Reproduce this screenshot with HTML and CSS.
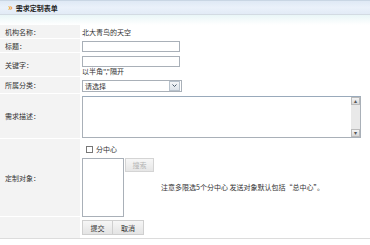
FILE: index.html
```html
<!DOCTYPE html>
<html>
<head>
<meta charset="utf-8">
<link rel="stylesheet" href="styles.css">
</head>
<body>
<div class="head">
  <span class="arrow">»</span><span class="title">需求定制表单</span>
</div>
<div class="head-fade"></div>
<div class="form">
  <div class="row r1"><div class="lab">机构名称：</div><div class="val">北大青鸟的天空</div></div>
  <div class="row r2"><div class="lab">标题：</div><div class="val"><div class="input"></div></div></div>
  <div class="row r3"><div class="lab">关键字：</div><div class="val col"><div class="input"></div><div class="hint">以半角","隔开</div></div></div>
  <div class="row r4"><div class="lab">所属分类：</div><div class="val"><div class="select"><span>请选择</span><span class="dd"><svg width="7" height="7" viewBox="0 0 7 7"><path d="M1.5 2.5 L3.5 4.5 L5.5 2.5" fill="none" stroke="#4a5a6a" stroke-width="1"/></svg></span></div></div></div>
  <div class="row r5"><div class="lab">需求描述：</div><div class="val"><div class="area"><div class="sb"><span class="sbtn">▴</span><span class="track"></span><span class="sbtn">▾</span></div></div></div></div>
  <div class="row r6"><div class="lab">定制对象：</div><div class="val col">
    <div class="chk"><span class="box"></span>分中心</div>
    <div class="pick"><div class="list"></div><div class="search">搜索</div><div class="note">注意多限选5个分中心 发送对象默认包括“总中心”。</div></div>
  </div></div>
  <div class="row r7"><div class="lab"></div><div class="val"><div class="btn">提交</div><div class="btn">取消</div></div></div>
</div>
</body>
</html>
```
FILE: styles.css
```css
html, body { margin: 0; padding: 0; background: #fff; }
body { font-family: "Noto Sans CJK SC", "Liberation Sans", sans-serif; font-size: 7px; color: #333; width: 370px; height: 245px; overflow: hidden; }
.head { height: 13px; border-top: 1px solid #c9d6e4; border-bottom: 1px solid #d3dbe3; background: linear-gradient(#dfe9f5, #eaf1fa 50%, #e2ebf6); display: flex; align-items: center; padding-left: 8px; }
.arrow { color: #f39a1e; font-weight: bold; font-size: 9px; margin-right: 3px; line-height: 1; }
.title { font-weight: bold; color: #222; font-size: 7px; }
.head-fade { height: 10px; background: linear-gradient(#e9f6f7, #fff); }
.form { border-bottom: 1px solid #dcdcdc; width: 370px; }
.row { display: flex; }
.lab { width: 80px; flex: none; background: #f3f3f3; border-bottom: 1px solid #fff; display: flex; align-items: center; padding-left: 5px; box-sizing: border-box; }
.val { flex: 1; padding-left: 2px; display: flex; align-items: center; }
.col { flex-direction: column; align-items: flex-start; justify-content: flex-start; }
.r1 { height: 14px; }
.r2 { height: 14px; }
.r3 { height: 24px; }
.r3 .val { padding-top: 3px; }
.r3 .hint { margin-top: 0px; line-height: 9px; }
.r4 { height: 17px; }
.r5 { height: 45px; }
.r6 { height: 78px; }
.r7 { height: 21px; }
.r7 .lab { border-bottom: none; }
.input { width: 96px; height: 9px; border: 1px solid #a9b0b8; background: #fff; }
.select { width: 96px; height: 10px; border: 1px solid #a9b0b8; display: flex; align-items: center; justify-content: space-between; padding-left: 2px; box-sizing: content-box; }
.select span:first-child { line-height: 10px; }
.dd { width: 9px; height: 8px; border: 1px solid #b8c2cc; background: linear-gradient(#f4f6f8, #dde3ea); margin-right: 1px; display: flex; align-items: center; justify-content: center; }
.area { width: 277px; height: 40px; border: 1px solid #a9b0b8; border-top-color: #9ab; display: flex; justify-content: flex-end; }
.sb { width: 9px; height: 40px; display: flex; flex-direction: column; background: #ececec; }
.sbtn { height: 8px; background: linear-gradient(#f4f4f4, #d8d8d8); border: 1px solid #bbb; box-sizing: border-box; font-size: 6px; line-height: 6px; text-align: center; color: #555; }
.track { flex: 1; background: #e9e9e9; }
.chk { display: flex; align-items: center; height: 10px; margin-top: 5px; padding-left: 4px; }
.box { width: 5px; height: 5px; border: 1px solid #777; margin-right: 3px; background: #fff; }
.pick { display: flex; align-items: flex-start; margin-top: 4px; }
.list { width: 40px; height: 57px; border: 1px solid #a9b0b8; background: #fff; }
.search { width: 29px; height: 14px; margin-left: 1px; border: 1px solid #d4d4d4; background: linear-gradient(#f7f7f7, #e6e6e6); color: #b5b5b5; display: flex; align-items: center; justify-content: center; box-sizing: border-box; }
.note { margin-left: 7px; margin-top: 24px; }
.r7 .val { align-items: flex-start; padding-top: 3px; }
.btn { width: 31px; height: 15px; border: 1px solid #cfcfcf; background: linear-gradient(#f6f6f6, #e4e4e4); display: flex; align-items: center; justify-content: center; box-sizing: border-box; color: #333; margin-right: 0; }
.btn + .btn { border-left: none; }
```
